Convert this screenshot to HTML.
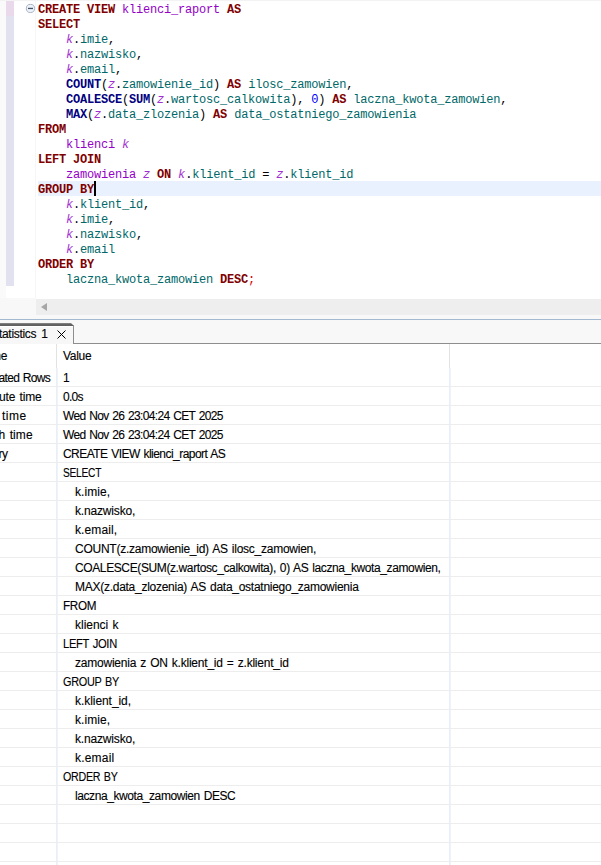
<!DOCTYPE html>
<html><head><meta charset="utf-8">
<style>
*{margin:0;padding:0;box-sizing:border-box}
html,body{width:601px;height:865px;overflow:hidden;background:#fafafa;position:relative}
.abs{position:absolute}
#topline{left:0;top:0;width:601px;height:1px;background:#f3f3f3}
#editor{left:6px;top:1px;width:595px;height:298px;background:#fff}
#barp{left:6px;top:1px;width:8px;height:15px;background:#ead9eb}
#barl{left:6px;top:16px;width:8px;height:270px;background:#e1e1ef}
#ruler{left:35px;top:1px;width:1px;height:297px;background:#f6f6f6}
#curline{left:38px;top:181px;width:563px;height:15px;background:#e8f1fd}
#caret{left:94px;top:181px;width:2px;height:15px;background:#000}
#code{left:38px;top:2.5px;font-family:"Liberation Mono",monospace;font-size:12px;letter-spacing:-0.2px;line-height:15px;white-space:pre;color:#000}
#code .k{color:#800000;font-weight:bold}
#code .f{color:#000080;font-weight:bold}
#code .t{color:#9400c8}
#code .a{color:#a030d0;font-style:italic}
#code .c{color:#006868}
#code .n{color:#0000ff}
#code .r{color:#e00000}
#hscroll{left:36px;top:299px;width:565px;height:16px;background:#eeeeee}
#arrow{left:41px;top:303px;width:0;height:0;border-top:4.5px solid transparent;border-bottom:4.5px solid transparent;border-right:6px solid #a6a6a6}
#gap{left:0;top:298px;width:601px;height:21px;background:#f8f8f8}
#blueline{left:0;top:319px;width:601px;height:1px;background:#a3b9cf}
#panel{left:0;top:320px;width:601px;height:545px;background:#f8f8f8}
#tab{left:-10px;top:323px;width:84px;height:21px;background:#f7f7f7}
#tabtop{left:-10px;top:323px;width:84px;height:3px;background:linear-gradient(#8c8c8c,#5c5c5c 60%,#626262);clip-path:polygon(0 0,81px 0,84px 3px,0 3px)}
#tabwhite{left:0;top:326px;width:73px;height:1px;background:#fff}
#tabright{left:73px;top:325px;width:1px;height:19px;background:#8e8e8e}
#tabline{left:73px;top:343px;width:528px;height:1px;background:#8e8e8e}
#tabtext{-webkit-text-stroke:0.12px #000;left:-1px;top:326px;font-family:"Liberation Sans",sans-serif;font-size:12px;letter-spacing:-0.32px;word-spacing:2px;line-height:16px;color:#000;white-space:pre}
#table{left:0;top:344px;width:601px;height:521px;background:#fff}
.grid{position:absolute;left:0;width:601px;height:1px;background:#ededed}
#hdiv1{left:56px;top:344px;width:1px;height:24px;background:#e2e2e2}
#hdiv2{left:449px;top:344px;width:1px;height:24px;background:#e2e2e2}
#rdiv1{left:56px;top:368px;width:2px;height:497px;background:linear-gradient(90deg,#e6effb 50%,#f1f2f4 50%)}
#rdiv2{left:449px;top:368px;width:2px;height:497px;background:linear-gradient(90deg,#e6effb 50%,#f1f2f4 50%)}
.cell{position:absolute;-webkit-text-stroke:0.12px #000;font-family:"Liberation Sans",sans-serif;font-size:12px;letter-spacing:-0.6px;word-spacing:1px;line-height:19px;white-space:pre;color:#000}
</style></head><body>
<div class="abs" id="topline"></div>
<div class="abs" id="editor"></div>
<div class="abs" id="barp"></div>
<div class="abs" id="barl"></div>
<div class="abs" id="ruler"></div>
<div class="abs" id="curline"></div>
<svg class="abs" style="left:25px;top:3px" width="11" height="11" viewBox="0 0 11 11"><circle cx="5.45" cy="5.45" r="4.1" fill="#edf3f9" stroke="#9fadbd" stroke-width="0.9"/><rect x="3" y="4.8" width="5" height="1.3" fill="#465366"/></svg>
<div class="abs" id="code"><span class="k">CREATE VIEW</span> <span class="t">klienci_raport</span> <span class="k">AS</span>
<span class="k">SELECT</span>
    <span class="a">k</span>.<span class="c">imie</span>,
    <span class="a">k</span>.<span class="c">nazwisko</span>,
    <span class="a">k</span>.<span class="c">email</span>,
    <span class="f">COUNT</span>(<span class="a">z</span>.<span class="c">zamowienie_id</span>) <span class="k">AS</span> <span class="c">ilosc_zamowien</span>,
    <span class="f">COALESCE</span>(<span class="f">SUM</span>(<span class="a">z</span>.<span class="c">wartosc_calkowita</span>), <span class="n">0</span>) <span class="k">AS</span> <span class="c">laczna_kwota_zamowien</span>,
    <span class="f">MAX</span>(<span class="a">z</span>.<span class="c">data_zlozenia</span>) <span class="k">AS</span> <span class="c">data_ostatniego_zamowienia</span>
<span class="k">FROM</span>
    <span class="t">klienci</span> <span class="a">k</span>
<span class="k">LEFT JOIN</span>
    <span class="t">zamowienia</span> <span class="a">z</span> <span class="k">ON</span> <span class="a">k</span>.<span class="c">klient_id</span> = <span class="a">z</span>.<span class="c">klient_id</span>
<span class="k">GROUP BY</span>
    <span class="a">k</span>.<span class="c">klient_id</span>,
    <span class="a">k</span>.<span class="c">imie</span>,
    <span class="a">k</span>.<span class="c">nazwisko</span>,
    <span class="a">k</span>.<span class="c">email</span>
<span class="k">ORDER BY</span>
    <span class="c">laczna_kwota_zamowien</span> <span class="k">DESC</span><span class="r">;</span></div>
<div class="abs" id="caret"></div>
<div class="abs" id="gap"></div>
<div class="abs" style="left:36px;top:298px;width:565px;height:1px;background:#fff"></div>
<div class="abs" id="hscroll"></div>
<div class="abs" id="arrow"></div>
<div class="abs" id="blueline"></div>
<div class="abs" id="panel"></div>
<div class="abs" id="tab"></div>
<div class="abs" id="tabtop"></div>
<div class="abs" id="tabwhite"></div>
<div class="abs" id="tabright"></div>
<div class="abs" id="tabline"></div>
<div class="abs" id="tabtext">tatistics 1</div>
<svg class="abs" style="left:57px;top:330px" width="10" height="10" viewBox="0 0 10 10"><path d="M0.5 0.5L8.5 8.5M8.5 0.5L0.5 8.5" stroke="#000" stroke-width="1"/></svg>
<div class="abs" id="table"></div>
<div class="abs" id="hdiv1"></div>
<div class="abs" id="hdiv2"></div>
<div class="abs" id="rdiv1"></div>
<div class="abs" id="rdiv2"></div>
<div id="grids"><div class="grid" style="top:386px"></div><div class="grid" style="top:405px"></div><div class="grid" style="top:424px"></div><div class="grid" style="top:443px"></div><div class="grid" style="top:462px"></div><div class="grid" style="top:481px"></div><div class="grid" style="top:500px"></div><div class="grid" style="top:519px"></div><div class="grid" style="top:538px"></div><div class="grid" style="top:557px"></div><div class="grid" style="top:576px"></div><div class="grid" style="top:595px"></div><div class="grid" style="top:614px"></div><div class="grid" style="top:633px"></div><div class="grid" style="top:652px"></div><div class="grid" style="top:671px"></div><div class="grid" style="top:690px"></div><div class="grid" style="top:709px"></div><div class="grid" style="top:728px"></div><div class="grid" style="top:747px"></div><div class="grid" style="top:766px"></div><div class="grid" style="top:785px"></div><div class="grid" style="top:804px"></div><div class="grid" style="top:823px"></div><div class="grid" style="top:842px"></div><div class="grid" style="top:861px"></div></div>
<div id="cells"><div class="cell" style="left:-193.1px;width:200px;text-align:right;letter-spacing:-0.4px;top:344px;line-height:24px">me</div><div class="cell" style="left:63px;top:344px;letter-spacing:-0.300px;line-height:24px">Value</div><div class="cell" style="left:-1.5px;letter-spacing:-0.675px;top:369px;">ated Rows</div><div class="cell" style="left:63px;top:369px;letter-spacing:-0.600px;">1</div><div class="cell" style="left:-1px;letter-spacing:-0.143px;top:388px;">ute time</div><div class="cell" style="left:63px;top:388px;letter-spacing:-0.725px;">0.0s</div><div class="cell" style="left:2px;letter-spacing:0.533px;top:407px;">time</div><div class="cell" style="left:63px;top:407px;letter-spacing:-0.650px;">Wed Nov 26 23:04:24 CET 2025</div><div class="cell" style="left:-1.5px;letter-spacing:0.08px;top:426px;">h time</div><div class="cell" style="left:63px;top:426px;letter-spacing:-0.650px;">Wed Nov 26 23:04:24 CET 2025</div><div class="cell" style="left:-192.3px;width:200px;text-align:right;letter-spacing:-0.4px;top:445px;">ry</div><div class="cell" style="left:63px;top:445px;letter-spacing:-0.548px;">CREATE VIEW klienci_raport AS</div><div class="cell" style="left:63px;top:464px;letter-spacing:-0.3px;transform:scaleX(0.8513);transform-origin:0 0;">SELECT</div><div class="cell" style="left:75px;top:483px;letter-spacing:0.086px;">k.imie,</div><div class="cell" style="left:75px;top:502px;letter-spacing:-0.164px;">k.nazwisko,</div><div class="cell" style="left:75px;top:521px;letter-spacing:0.113px;">k.email,</div><div class="cell" style="left:75px;top:540px;letter-spacing:-0.252px;">COUNT(z.zamowienie_id) AS ilosc_zamowien,</div><div class="cell" style="left:75px;top:559px;letter-spacing:-0.386px;">COALESCE(SUM(z.wartosc_calkowita), 0) AS laczna_kwota_zamowien,</div><div class="cell" style="left:75px;top:578px;letter-spacing:-0.266px;">MAX(z.data_zlozenia) AS data_ostatniego_zamowienia</div><div class="cell" style="left:63px;top:597px;letter-spacing:-0.3px;transform:scaleX(0.9738);transform-origin:0 0;">FROM</div><div class="cell" style="left:75px;top:616px;letter-spacing:-0.011px;">klienci k</div><div class="cell" style="left:63px;top:635px;letter-spacing:-0.3px;transform:scaleX(0.9282);transform-origin:0 0;">LEFT JOIN</div><div class="cell" style="left:75px;top:654px;letter-spacing:-0.222px;">zamowienia z ON k.klient_id = z.klient_id</div><div class="cell" style="left:63px;top:673px;letter-spacing:-0.3px;transform:scaleX(0.9067);transform-origin:0 0;">GROUP BY</div><div class="cell" style="left:75px;top:692px;letter-spacing:-0.058px;">k.klient_id,</div><div class="cell" style="left:75px;top:711px;letter-spacing:0.086px;">k.imie,</div><div class="cell" style="left:75px;top:730px;letter-spacing:-0.164px;">k.nazwisko,</div><div class="cell" style="left:75px;top:749px;letter-spacing:0.200px;">k.email</div><div class="cell" style="left:63px;top:768px;letter-spacing:-0.3px;transform:scaleX(0.8901);transform-origin:0 0;">ORDER BY</div><div class="cell" style="left:75px;top:787px;letter-spacing:-0.412px;">laczna_kwota_zamowien DESC</div></div>
</body></html>
